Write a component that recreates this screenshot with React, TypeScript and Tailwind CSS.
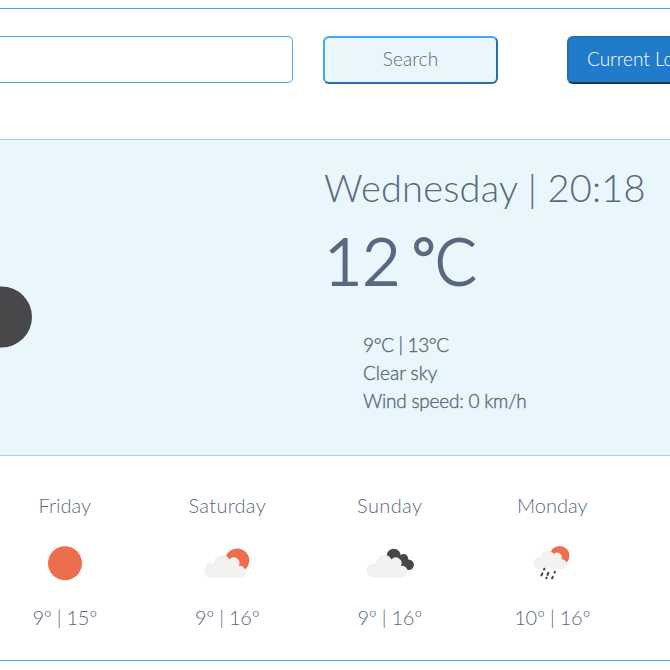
import type { ReactNode } from "react";

const CLOUD =
  "M7 30 A7.3 7.3 0 0 1 7.3 15.2 Q8 15.2 9 15.4 A8.6 8.6 0 0 1 25 11.6 A5.8 5.8 0 0 1 34.5 18 A6 6 0 0 1 36 30 Z";

function Sun() {
  return (
    <svg width="50" height="50" viewBox="0 0 50 50" className="block">
      <circle cx="25" cy="25.2" r="17" fill="#ec6e4c" />
    </svg>
  );
}

function CloudySun() {
  return (
    <svg width="50" height="50" viewBox="0 0 50 50" className="block">
      <circle cx="35.2" cy="22.6" r="12" fill="#ec6e4c" />
      <path transform="translate(2.4 9.8)" d={CLOUD} fill="#f2f2f0" />
    </svg>
  );
}

function BrokenClouds() {
  return (
    <svg width="50" height="50" viewBox="0 0 50 50" className="block">
      <g fill="#48484a">
        <circle cx="28.7" cy="17.7" r="7" />
        <circle cx="38.7" cy="20.6" r="4.5" />
        <circle cx="43.7" cy="26.8" r="5.2" />
        <path d="M28 15 L38 18 L43 31 L34 27 Z" />
      </g>
      <path transform="translate(1.5 9.8)" d={CLOUD} fill="#f2f2f0" />
    </svg>
  );
}

function Rain() {
  return (
    <svg width="50" height="50" viewBox="0 0 50 50" className="block">
      <circle cx="32.6" cy="17.7" r="9.8" fill="#ec6e4c" />
      <path transform="translate(6.4 6.7) scale(0.81)" d={CLOUD} fill="#f2f2f0" />
      <path
        d="M17.4 30.8 l-.4 .8 M15.4 35.4 l-.9 2 M21.4 34.8 l-.9 2 M19.6 39.6 l-.3 .6 M27.9 33.8 l-.4 .8 M25.7 38.8 l-.6 1.5"
        stroke="#48484a"
        strokeWidth="2.1"
        strokeLinecap="round"
        fill="none"
      />
    </svg>
  );
}

type Day = { name: string; temps: string; icon: ReactNode; nameStyle: string };

const days: Day[] = [
  { name: "Friday", temps: "9º | 15º", icon: <Sun />, nameStyle: "tracking-[0px]" },
  { name: "Saturday", temps: "9º | 16º", icon: <CloudySun />, nameStyle: "tracking-[0.3px]" },
  { name: "Sunday", temps: "9º | 16º", icon: <BrokenClouds />, nameStyle: "tracking-[0.4px]" },
  { name: "Monday", temps: "10º | 16º", icon: <Rain />, nameStyle: "tracking-[0px]" },
];

export default function App() {
  return (
    <div className="h-[670px] w-[670px] overflow-hidden bg-white pt-2 font-['Lato',sans-serif] font-light text-[#5a6780]">
      <main className="border-y border-[#42a5f5]">
        <form className="flex h-[130px] w-[760px] items-start pt-[27px]">
          <input
            aria-label="City"
            className="h-[47px] w-[293px] rounded-r-[5px] border border-l-0 border-[#42a5f5] bg-white outline-none"
          />
          <button
            type="button"
            className="ml-[30px] h-12 w-[175px] rounded-[6px] border-2 border-[#42a5f5] border-r-[#2b6ea6] border-b-[#2b6ea6] bg-[#e9f6fc] pb-px text-[19px] tracking-[0.15px]"
          >
            Search
          </button>
          <button
            type="button"
            className="ml-[69px] h-12 w-[175px] rounded-[6px] border-2 border-[#2b6ea6] border-r-[#173a59] border-b-[#173a59] bg-[#217bcb] pb-px pl-[18px] text-left text-[19px] whitespace-nowrap text-white"
          >
            Current Location
          </button>
        </form>

        <section className="flex h-[317px] border-y border-[#9cd7f3] bg-[#e9f6fc]">
          <div className="flex w-[324px] items-start pt-[146px]">
            <svg width="32" height="62" viewBox="0 0 32 62">
              <circle cx="1.5" cy="31" r="30.5" fill="#48484a" />
            </svg>
          </div>
          <div className="pt-[22px]">
            <h1 className="h-[50px] text-[38px] leading-[50px] font-light tracking-[0.2px] whitespace-nowrap">
              Wednesday | 20:18
            </h1>
            <p className="mt-[8px] h-20 text-[66px] leading-[80px] font-light whitespace-nowrap [word-spacing:-6px] [-webkit-text-stroke:1.8px_#5a6780]">
              12{" "}
              <span className="inline-block origin-[10%_24%] scale-[0.84] tracking-[-5px] [-webkit-text-stroke:3px_#5a6780]">
                °
              </span>
              <span className="inline-block origin-left scale-x-[0.93]">C</span>
            </p>
            <ul className="mt-[31px] ml-[39px] text-[19px] leading-7 font-light whitespace-nowrap [-webkit-text-stroke:0.35px_#5a6780]">
              <li className="tracking-[-0.35px]">9°C | 13°C</li>
              <li>Clear sky</li>
              <li className="tracking-[-0.22px]">Wind speed: 0 km/h</li>
            </ul>
          </div>
        </section>

        <section className="-ml-[16.5px] grid h-[204px] w-[650px] grid-cols-4 pt-[35px]">
          {days.map((day) => (
            <div key={day.name} className="flex flex-col items-center text-[20px] leading-7 whitespace-nowrap">
              <h2 className={day.nameStyle}>{day.name}</h2>
              <div className="mt-[19px] mb-[15px]">{day.icon}</div>
              <p className="tracking-[-0.25px]">{day.temps}</p>
            </div>
          ))}
        </section>
      </main>
    </div>
  );
}
